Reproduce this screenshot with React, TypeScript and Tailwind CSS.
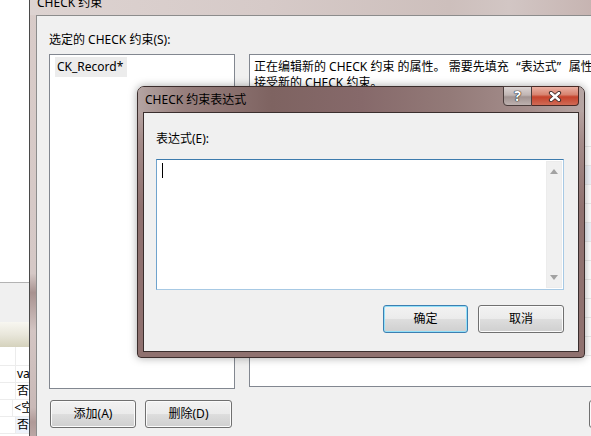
import React from 'react';

const FONT = "font-['Noto_Sans','Noto_Sans_CJK_SC',sans-serif]";

type BtnProps = { label: string; primary?: boolean; className?: string };

// Win7 style push button
function WinButton({ label, primary = false, className = '' }: BtnProps) {
  return (
    <div
      className={`flex h-[28px] shrink-0 items-center justify-center rounded-[3px] border bg-[linear-gradient(#f2f2f2_0%,#ebebeb_48%,#dddddd_52%,#cfcfcf_100%)] text-[12px] leading-[14px] text-black ${
        primary
          ? 'border-[#3c7fb1] shadow-[inset_0_0_0_1px_#93e0f9]'
          : 'border-[#707070] shadow-[inset_0_0_0_1px_#fbfbfb]'
      } ${className}`}
    >
      {label}
    </div>
  );
}

const gridRows = [false, false, true, false, false, true, false, false, false, false, false, false];

const App: React.FC = () => {
  return (
    <div className={`relative h-[436px] w-[591px] overflow-hidden bg-white ${FONT}`}>
      {/* Window behind, only its left strip shows */}
      <div className="absolute left-0 top-0 flex h-full w-[40px] flex-col">
        <div className="h-[282px] bg-white" />
        <div className="h-[40px] border-t border-[#b3b3b3] bg-[#f0f0f0]" />
        <div className="h-[25px] bg-[linear-gradient(#f8f7f1,#e9e7db_50%,#d5d2bd)]" />
        <div className="flex h-[19px] border-b border-[#ececec]">
          <div className="w-[16px] border-r border-[#ececec]" />
        </div>
        {[
          { t: 'va', blue: false },
          { t: '否', blue: false },
          { t: '<空>', blue: false },
          { t: '否', blue: true },
        ].map((r, i) => (
          <div key={i} className={`flex h-[17px] border-b border-[#ececec] ${r.blue ? 'bg-[#eef3fb]' : ''}`}>
            <div className="w-[16px] border-r border-[#ececec] bg-white" />
            <div className="whitespace-nowrap pl-[1px] text-[12px] leading-[16px] text-black">{r.t}</div>
          </div>
        ))}
      </div>

      {/* Outer window: CHECK 约束 */}
      <div className="absolute left-[29px] top-[-15px] flex h-[480px] w-[600px] flex-col rounded-t-[6px] border-l border-t border-[#4a4a4a] bg-[linear-gradient(#d9ccc9_0%,#d5c8c6_60%,#a89290_64%,#d3c5c3_72%,#c9b9b7_88%,#b09a98_91%,#d0c2c0_100%)]">
        <div className="h-[29px] bg-[linear-gradient(90deg,#ddd3d1_0%,#d6cac8_40%,#cdbfbc_70%,#d2c6c4_80%,#c1aca9_100%)] pl-[7px] pt-[10px] text-[12px] leading-[14px] text-black">
          CHECK 约束
        </div>
        <div className="ml-[6px] flex flex-1 flex-col border-l border-t border-[#8c8c8c] bg-[#f0f0f0] pl-[12px]">
          <div className="pt-[17px] text-[12px] leading-[14px] text-black">选定的 CHECK 约束(S):</div>
          <div className="mt-[7px] flex gap-[14px]">
            <div className="h-[335px] w-[186px] shrink-0 border border-[#828790] bg-white pl-[5px] pt-[2px]">
              <div className="flex h-[20px] w-[72px] items-center bg-[#ececec] pl-[2px] text-[12px] leading-[14px] text-black">
                CK_Record*
              </div>
            </div>
            <div className="flex h-[333px] w-[400px] shrink-0 flex-col border border-[#828790] bg-white">
              <div className="h-[73px] pl-[4px] pt-[4px] text-[12px] leading-[16px] text-black">
                <div className="whitespace-nowrap">
                  正在编辑新的 CHECK 约束 的属性。 需要先填充
                  <span className="inline-block w-[12px] text-right">“</span>
                  表达式
                  <span className="inline-block w-[12px] text-left">”</span>
                  属性，然后才能
                </div>
                <div className="whitespace-nowrap">接受新的 CHECK 约束。</div>
              </div>
              {gridRows.map((blue, i) => (
                <div key={i} className={`h-[19px] border-b border-[#ebebeb] ${blue ? 'bg-[#f1f5fb]' : ''}`} />
              ))}
            </div>
          </div>
          <div className="mt-[11px] flex pl-[1px]">
            <WinButton label="添加(A)" className="w-[86px]" />
            <WinButton label="删除(D)" className="ml-[9px] w-[87px]" />
            <WinButton label="确定" className="ml-[357px] w-[86px]" />
          </div>
        </div>
      </div>

      {/* Dialog: CHECK 约束表达式 */}
      <div className="absolute left-[137px] top-[86px] flex h-[272px] w-[448px] flex-col rounded-t-[7px] rounded-b-[4px] border border-[#3b2d2c] bg-[linear-gradient(#c4b6b4_0%,#a48c8a_20%,#8f716f_45%,#8f716f_100%)] shadow-[0_0_8px_rgba(0,0,0,0.35)]">
        <div className="flex h-[25px] items-center rounded-t-[6px] bg-[linear-gradient(90deg,#b4a4a2_0%,#98807e_10%,#7e6361_30%,#86696a_50%,#937a78_70%,#a58e8c_88%,#b6a6a4_100%)] pl-[7px] text-[12px] leading-[14px] text-black">
          CHECK 约束表达式
        </div>

        {/* caption buttons */}
        <div className="absolute right-[5px] top-[-1px] flex h-[20px]">
          <div className="flex w-[29px] items-center justify-center rounded-bl-[4px] border border-[#4a3c3b] bg-[linear-gradient(#dcd4d3_0%,#c0b5b3_45%,#a19391_55%,#bdb1af_100%)] text-[14px] font-bold leading-[14px] text-white [text-shadow:0_0_1px_#222,0_0_1px_#222,0_0_1px_#222]">
            ?
          </div>
          <div className="flex w-[47px] items-center justify-center rounded-br-[4px] border border-l-0 border-[#4a2a25] bg-[linear-gradient(#eab0a3_0%,#d88470_42%,#c5432c_55%,#d06a55_100%)]">
            <svg width="14" height="11" viewBox="0 0 14 11">
              <path d="M3 2 L11 9 M11 2 L3 9" stroke="#3a2a28" strokeWidth="4.2" strokeLinecap="round" />
              <path d="M3 2 L11 9 M11 2 L3 9" stroke="#ffffff" strokeWidth="2.4" strokeLinecap="round" />
            </svg>
          </div>
        </div>

        <div className="mx-[5px] mb-[5px] flex flex-1 flex-col border border-[#3a2e2d] bg-[#f0f0f0] pl-[12px]">
          <div className="pt-[19px] text-[12px] leading-[14px] text-black">表达式(E):</div>
          <div className="mt-[13px] flex h-[131px] w-[408px] border border-[#a7c9e4] border-t-[#3d7bad] border-l-[#6fa3cd] bg-white">
            <div className="flex-1 pl-[5px] pt-[3px]">
              <div className="h-[15px] w-px bg-black" />
            </div>
            <div className="my-px mr-px flex w-[16px] flex-col items-center justify-between border border-[#ececec] bg-[#f0f0f0] py-[7px]">
              <svg width="8" height="5" viewBox="0 0 8 5">
                <path d="M0 5 L4 0 L8 5 Z" fill="#a2a2a2" />
              </svg>
              <svg width="8" height="5" viewBox="0 0 8 5">
                <path d="M0 0 L8 0 L4 5 Z" fill="#a2a2a2" />
              </svg>
            </div>
          </div>
          <div className="mt-[15px] flex pl-[227px]">
            <WinButton label="确定" primary className="w-[85px]" />
            <WinButton label="取消" className="ml-[10px] w-[86px]" />
          </div>
        </div>
      </div>
    </div>
  );
};

export default App;
